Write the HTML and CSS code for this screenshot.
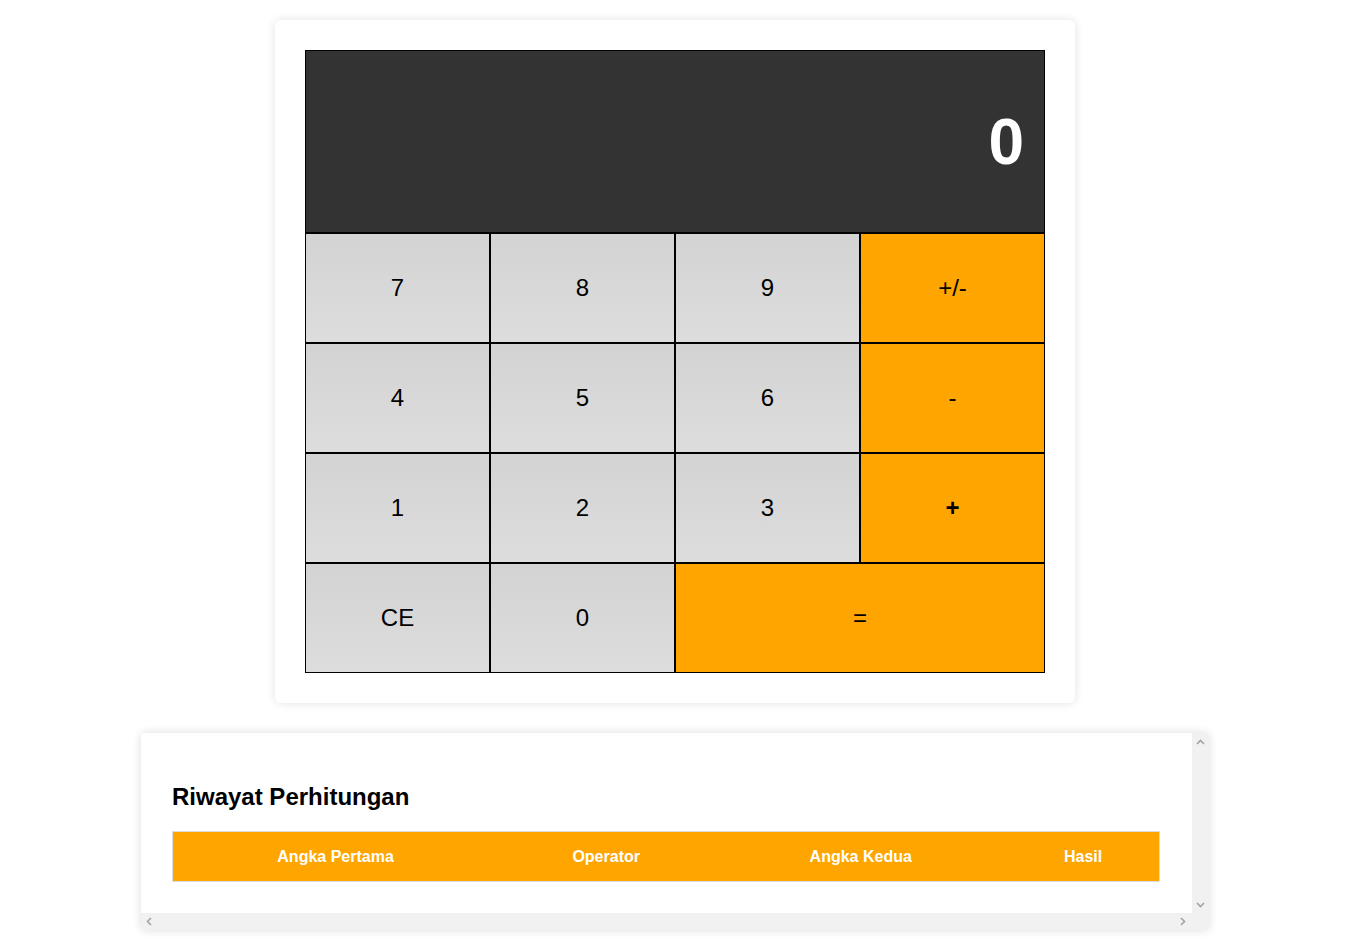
FILE: index.html
```html
<!DOCTYPE html>
<html lang="id">
<head>
<meta charset="utf-8">
<title>Kalkulator</title>
<link rel="stylesheet" href="styles.css">
</head>
<body>
<div class="calculator">
  <div class="display">0</div>
  <div class="keys">
    <button class="key">7</button>
    <button class="key">8</button>
    <button class="key">9</button>
    <button class="key op">+/-</button>
    <button class="key">4</button>
    <button class="key">5</button>
    <button class="key">6</button>
    <button class="key op">-</button>
    <button class="key">1</button>
    <button class="key">2</button>
    <button class="key">3</button>
    <button class="key op plus">+</button>
    <button class="key">CE</button>
    <button class="key">0</button>
    <button class="key op wide">=</button>
  </div>
</div>
<div class="history">
  <div class="history-body">
    <h2>Riwayat Perhitungan</h2>
    <table>
      <thead>
        <tr>
          <th>Angka Pertama</th>
          <th>Operator</th>
          <th>Angka Kedua</th>
          <th>Hasil</th>
        </tr>
      </thead>
      <tbody></tbody>
    </table>
  </div>
  <div class="vbar">
    <svg class="arrow" width="9" height="6" viewBox="0 0 9 6"><polyline points="1,5 4.5,1.5 8,5" fill="none" stroke="#a3a3a3" stroke-width="1.6"/></svg>
    <svg class="arrow" width="9" height="6" viewBox="0 0 9 6"><polyline points="1,1 4.5,4.5 8,1" fill="none" stroke="#a3a3a3" stroke-width="1.6"/></svg>
  </div>
  <div class="hbar">
    <svg class="arrow" width="6" height="9" viewBox="0 0 6 9"><polyline points="5,1 1.5,4.5 5,8" fill="none" stroke="#a3a3a3" stroke-width="1.6"/></svg>
    <svg class="arrow" width="6" height="9" viewBox="0 0 6 9"><polyline points="1,1 4.5,4.5 1,8" fill="none" stroke="#a3a3a3" stroke-width="1.6"/></svg>
  </div>
</div>
</body>
</html>
```
FILE: styles.css
```css
* { box-sizing: border-box; }
body {
  margin: 0;
  padding: 20px 0 30px 2px;
  font-family: "Liberation Sans", Arial, sans-serif;
  background: #fff;
}
.calculator {
  width: 800px;
  margin: 0 auto;
  padding: 30px;
  background: #fff;
  border-radius: 6px;
  box-shadow: 0 0 10px rgba(0, 0, 0, 0.12);
}
.display {
  height: 183px;
  background: #333;
  border: 1px solid #000;
  color: #fff;
  font-size: 64px;
  font-weight: bold;
  display: flex;
  align-items: center;
  justify-content: flex-end;
  padding: 0 20px;
}
.keys {
  display: grid;
  grid-template-columns: repeat(4, 185px);
  grid-auto-rows: 110px;
}
.key {
  border: 1px solid #000;
  background: linear-gradient(#d3d3d3, #dddddd);
  font-family: "Liberation Sans", Arial, sans-serif;
  font-size: 24px;
  color: #000;
  padding: 0;
  margin: 0;
}
.key.op { background: #ffa500; }
.key.plus { font-weight: bold; }
.key.wide { grid-column: span 2; }

.history {
  width: 1068px;
  margin: 30px auto 0;
  background: #fff;
  border-radius: 4px;
  box-shadow: 0 0 10px rgba(0, 0, 0, 0.14);
  overflow: hidden;
  display: grid;
  grid-template-columns: 1fr 17px;
  grid-template-rows: auto 17px;
}
.history-body {
  padding: 30px 32px 31px 31px;
}
.history h2 {
  font-size: 24px;
  margin: 20px 0;
}
table {
  width: 100%;
  border-collapse: collapse;
  border: 1px solid #ddd;
}
th {
  background: #ffa500;
  color: #fff;
  font-size: 16px;
  padding: 16px 15px 15px;
}
.vbar {
  grid-column: 2;
  grid-row: 1 / span 2;
  background: #f1f1f1;
  display: flex;
  flex-direction: column;
  justify-content: space-between;
  align-items: center;
  padding: 6px 0 22px;
}
.hbar {
  grid-column: 1;
  grid-row: 2;
  background: #f1f1f1;
  display: flex;
  justify-content: space-between;
  align-items: center;
  padding: 0 6px 0 5px;
}
.arrow { display: block; }
```
